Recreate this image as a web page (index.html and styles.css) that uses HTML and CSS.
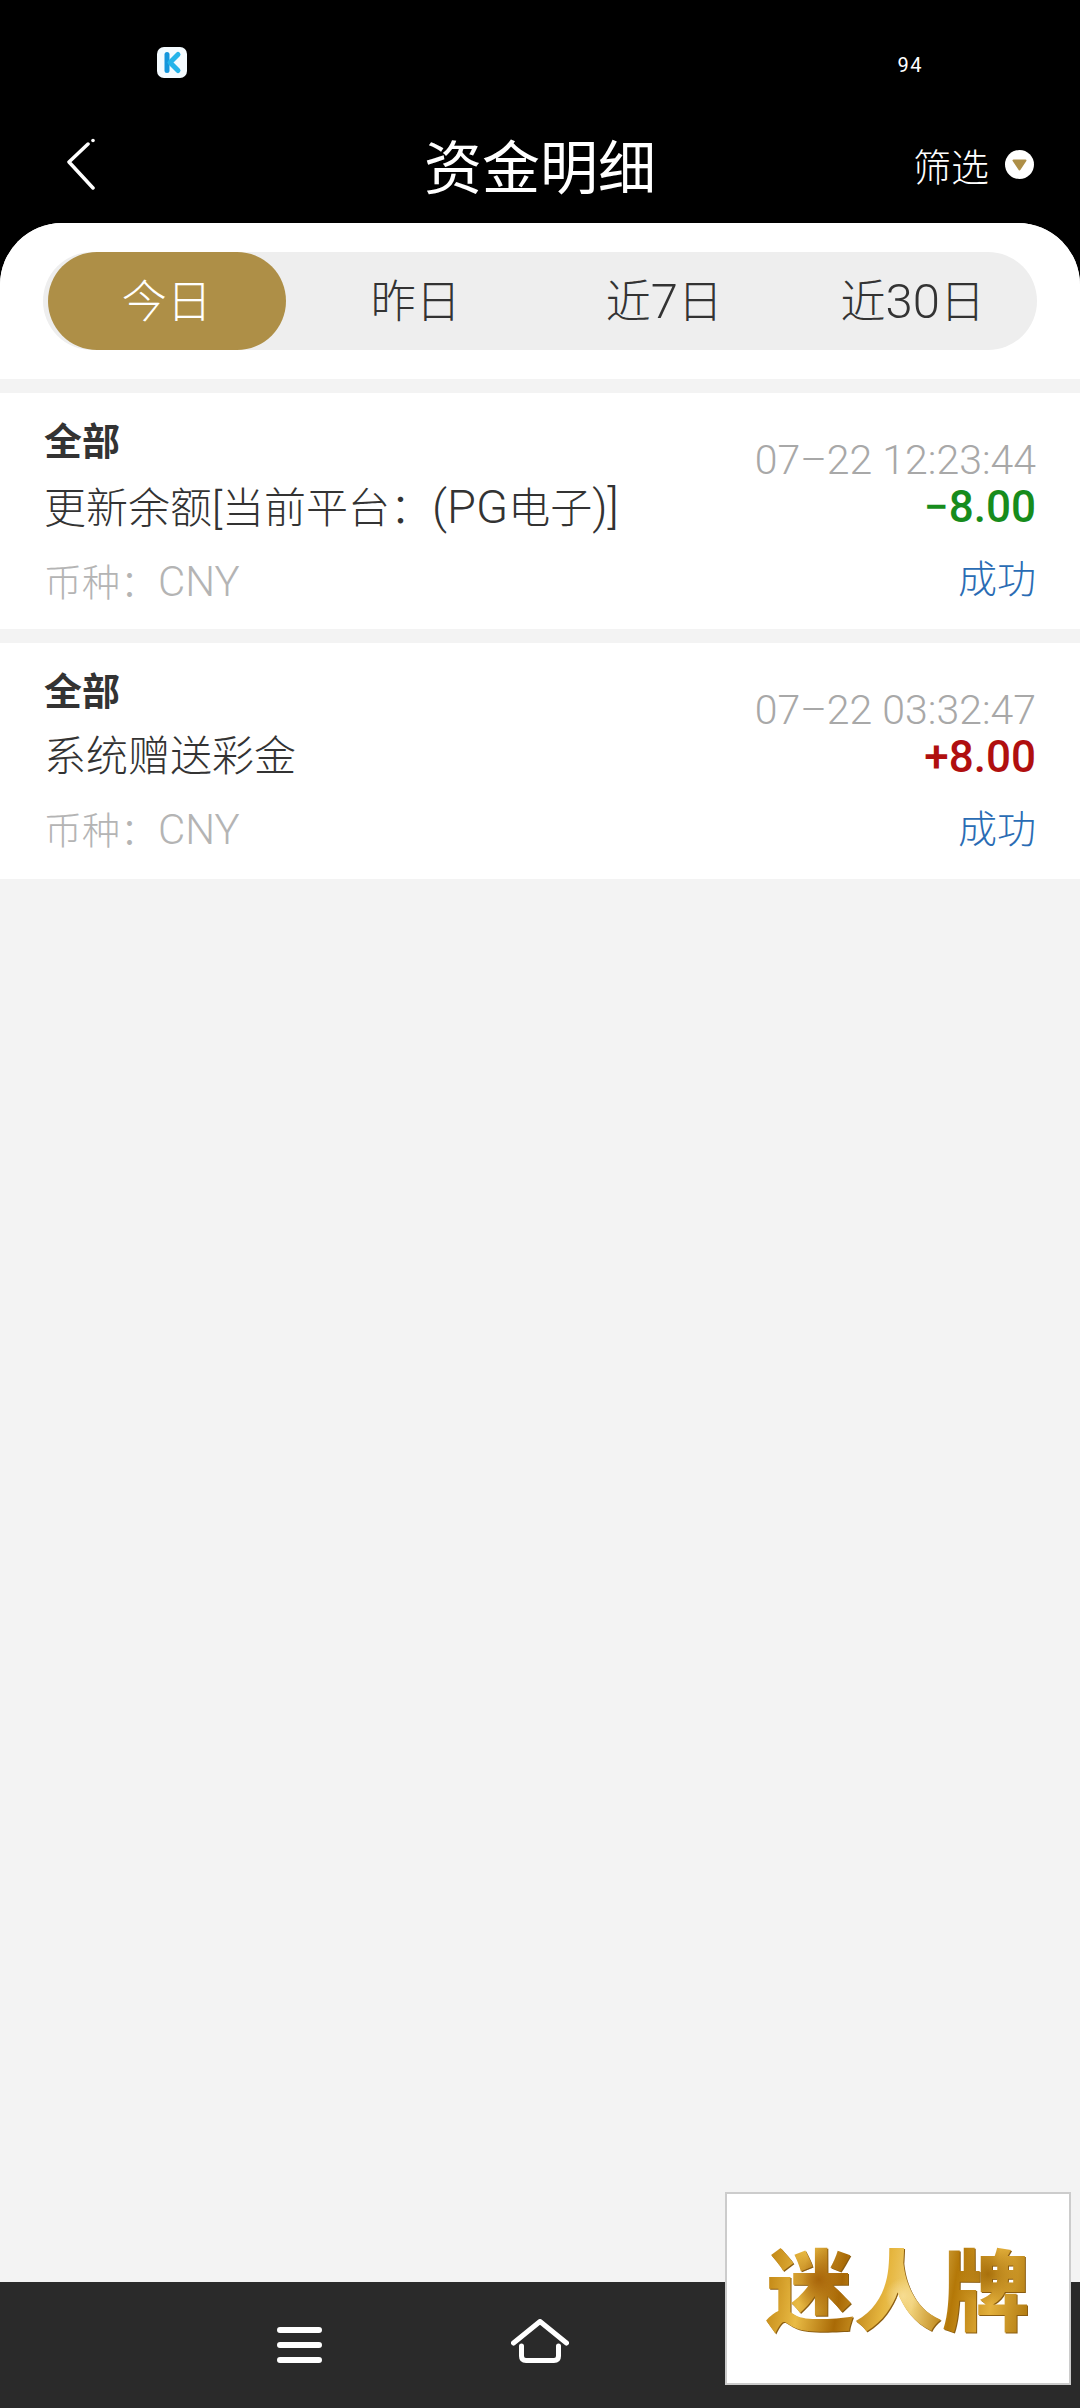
FILE: index.html
```html
<!DOCTYPE html>
<html lang="zh-CN">
<head>
    <meta charset="UTF-8">
    <meta name="viewport" content="width=device-width, initial-scale=1.0">
    <title>资金明细</title>
    <link rel="stylesheet" href="styles.css">
</head>
<body>

    <div class="status-bar">
        <svg class="app-icon" width="30" height="31" viewBox="0 0 30 31">
            <rect width="30" height="31" rx="7" fill="#f4fbff"/>
            <path d="M10 7.5 V23.5" stroke="#1496dc" stroke-width="5" stroke-linecap="round"/>
            <path d="M21 7.5 L13 15.5 L21 23.5" fill="none" stroke="#24b4ea" stroke-width="5" stroke-linecap="round" stroke-linejoin="round"/>
        </svg>
        <span class="signal">94</span>
    </div>

    <header class="nav-bar">
        <svg class="back" width="30" height="52" viewBox="0 0 30 52">
            <path d="M26 50 L2 24 L21 6" fill="none" stroke="#fff" stroke-width="3.5" stroke-linecap="round" stroke-linejoin="round"/>
            <circle cx="26" cy="2.5" r="1.8" fill="#fff"/>
        </svg>
        <h1>资金明细</h1>
        <div class="filter">
            <span>筛选</span>
            <svg width="29" height="29" viewBox="0 0 29 29">
                <circle cx="14.5" cy="14.5" r="14.5" fill="#fff"/>
                <path d="M8.5 10.5 H20.5 L14.5 19.5 Z" fill="#ae8f47" stroke="#ae8f47" stroke-width="2" stroke-linejoin="round"/>
            </svg>
        </div>
    </header>

    <main class="sheet">
        <div class="tabs-wrap">
            <div class="tabs">
                <div class="tab active">今日</div>
                <div class="tab">昨日</div>
                <div class="tab"><span>近<span class="num">7</span>日</span></div>
                <div class="tab"><span>近<span class="num">30</span>日</span></div>
            </div>
        </div>

        <div class="record">
            <div class="record-left">
                <div class="record-type">全部</div>
                <div class="record-name">更新余额[当前平台：<span class="latin">(PG</span>电子<span class="latin">)]</span></div>
                <div class="record-currency">币种：<span class="code">CNY</span></div>
            </div>
            <div class="record-right">
                <div class="record-time">07–22 12:23:44</div>
                <div class="record-amount minus">−8.00</div>
                <div class="record-status">成功</div>
            </div>
        </div>

        <div class="record">
            <div class="record-left">
                <div class="record-type">全部</div>
                <div class="record-name">系统赠送彩金</div>
                <div class="record-currency">币种：<span class="code">CNY</span></div>
            </div>
            <div class="record-right">
                <div class="record-time">07–22 03:32:47</div>
                <div class="record-amount plus">+8.00</div>
                <div class="record-status">成功</div>
            </div>
        </div>
    </main>

    <footer class="bottom-bar">
        <svg width="45" height="36" viewBox="0 0 45 36">
            <path d="M3 3 H42 M3 18 H42 M3 33 H42" stroke="#fff" stroke-width="6" stroke-linecap="round"/>
        </svg>
        <svg width="58" height="44" viewBox="0 0 58 44">
            <path d="M2.5 24 L29 2.5 L55.5 24" fill="none" stroke="#fff" stroke-width="5" stroke-linecap="round" stroke-linejoin="round"/>
            <path d="M10.5 27 V37 Q10.5 41.5 15 41.5 H43 Q47.5 41.5 47.5 37 V27" fill="none" stroke="#fff" stroke-width="5" stroke-linecap="round"/>
        </svg>
    </footer>

    <!-- floating brand card -->
    <div class="brand-card">
        <span class="brand-text">迷人牌</span>
    </div>

</body>
</html>
```

FILE: styles.css
```css
* {
    box-sizing: border-box;
}

html, body {
    margin: 0;
    height: 2408px;
}

body {
    position: relative;
    display: flex;
    flex-direction: column;
    overflow: hidden;
    background: #000;
    color: #333;
    font-family: Roboto, "Noto Sans CJK SC", sans-serif;
    font-weight: 300;
}

/* Top black area */
.status-bar {
    display: flex;
    justify-content: space-between;
    align-items: flex-start;
    height: 99px;
    padding: 47px 157px 0;
}

.app-icon {
    display: block;
}

.signal {
    color: #fff;
    font-size: 20px;
    font-weight: 400;
    letter-spacing: 1.5px;
    margin-top: 6px;
}

.nav-bar {
    display: flex;
    position: relative;
    align-items: center;
    justify-content: space-between;
    height: 124px;
    padding: 6px 46px 0 67px;
    color: #fff;
}

.nav-bar h1 {
    position: absolute;
    left: 0;
    right: 0;
    margin: 0;
    text-align: center;
    font-size: 58px;
    font-weight: 400;
}

.filter {
    display: flex;
    align-items: center;
    gap: 16px;
    font-size: 38px;
}

.filter svg {
    display: block;
}

/* White sheet */
.sheet {
    flex: 1;
    background: #f3f3f3;
    border-radius: 62px 62px 0 0;
    overflow: hidden;
}

.tabs-wrap {
    background: #fff;
    padding: 29px 43px;
    margin-bottom: 14px;
}

.tabs {
    display: grid;
    grid-template-columns: repeat(4, 1fr);
    height: 98px;
    background: #eee;
    border-radius: 49px;
}

.tab {
    display: flex;
    align-items: center;
    justify-content: center;
    padding-bottom: 6px;
    font-size: 45px;
    color: #333;
}

.tab .num {
    font-size: 49px;
}

.tab.active {
    margin-left: 5px;
    margin-right: 6px;
    background: #ae8f47;
    border-radius: 49px;
    color: #fff;
}

/* Record rows */
.record {
    display: flex;
    justify-content: space-between;
    height: 236px;
    padding: 24px 44px 16px 44px;
    margin-bottom: 14px;
    background: #fff;
}

.record-type {
    font-size: 38px;
    font-weight: 700;
    line-height: 50px;
}

.record-name {
    font-size: 42px;
    line-height: 80px;
}

.record-name .latin {
    font-size: 47px;
}

.record-currency {
    font-size: 38px;
    line-height: 66px;
    color: #b4b4b4;
}

.record-currency .code {
    font-size: 42px;
}

.record-right {
    text-align: right;
}

.record-time {
    margin-top: 18px;
    font-size: 41px;
    line-height: 50px;
    color: #a8a8a8;
}

.record-amount {
    font-size: 44px;
    font-weight: 500;
    line-height: 44px;
}

.record-amount.minus {
    color: #178c1c;
}

.record-amount.plus {
    color: #b00f0f;
}

.record-status {
    margin-top: 18px;
    font-size: 39px;
    line-height: 66px;
    color: #2a6cb4;
}

/* Bottom bar */
.bottom-bar {
    display: flex;
    align-items: flex-end;
    gap: 189px;
    height: 126px;
    padding: 0 0 45px 277px;
    background: #2a2a2a;
}

.bottom-bar svg {
    display: block;
}

.brand-card {
    position: absolute;
    left: 725px;
    top: 2192px;
    width: 346px;
    height: 193px;
    display: flex;
    justify-content: center;
    padding-top: 36px;
    background: #fff;
    border: 2px solid #ccc;
}

/* marbled gold lettering */
.brand-text {
    font-family: "Noto Sans CJK SC", sans-serif;
    font-size: 88px;
    font-weight: 900;
    line-height: 110px;
    height: 110px;
    background:
        radial-gradient(circle at 20% 45%, #a8650a 0, transparent 14%),
        radial-gradient(circle at 52% 60%, #f6dc92 0, transparent 12%),
        radial-gradient(circle at 84% 40%, #a8700c 0, transparent 13%),
        linear-gradient(100deg, #b97a08, #e9bb45 16%, #a96a06 30%, #e6b63f 46%, #f1d27a 56%, #b47808 70%, #e3b03c 84%, #a9720a);
    -webkit-background-clip: text;
    background-clip: text;
    color: transparent;
    filter: drop-shadow(1px 1px 0 #8a5c10);
}
```
